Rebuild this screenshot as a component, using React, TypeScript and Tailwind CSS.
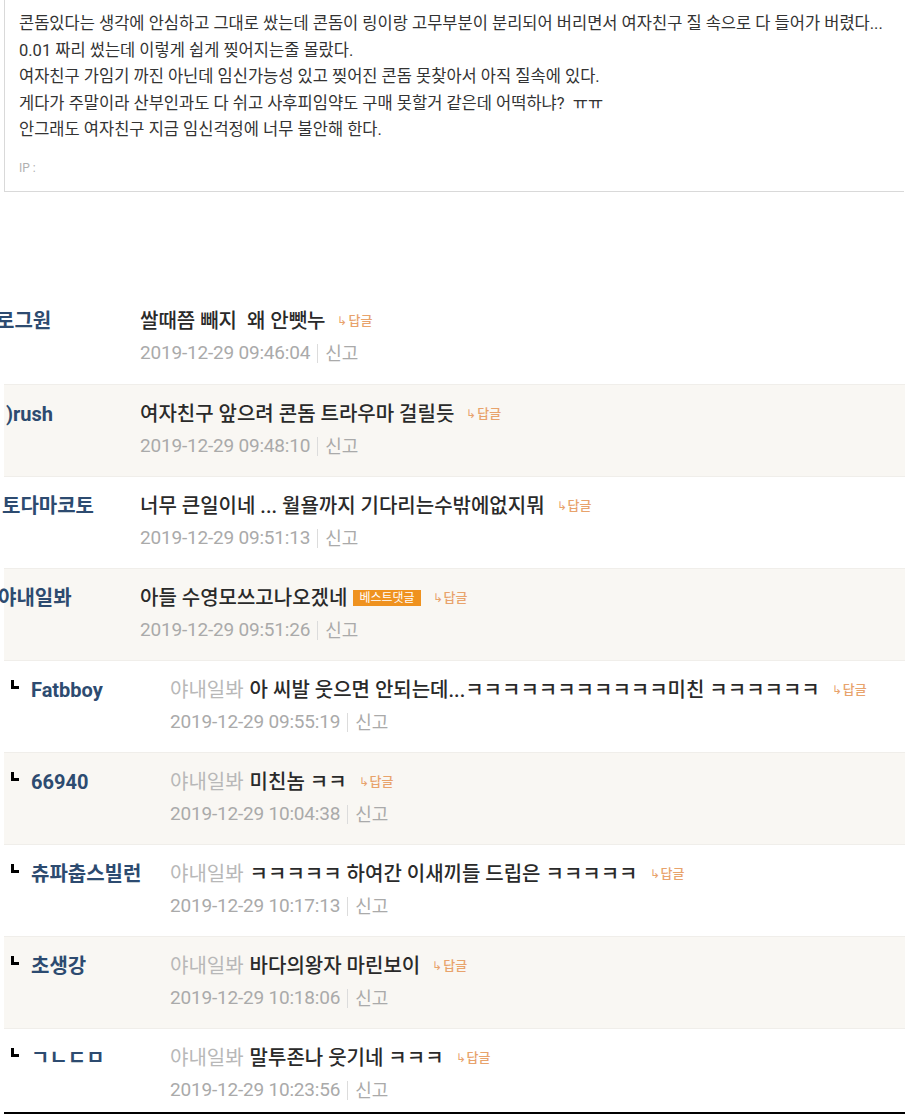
type Comment = {
  name: string;
  text: string;
  date: string;
  reply?: boolean;
  best?: boolean;
  shift?: string;
};

const comments: Comment[] = [
  { name: '로그원', text: '쌀때쯤 빼지  왜 안뺏누', date: '2019-12-29 09:46:04', shift: '-ml-[8px]' },
  { name: ')rush', text: '여자친구 앞으려 콘돔 트라우마 걸릴듯 ', date: '2019-12-29 09:48:10', shift: 'ml-[2px]' },
  { name: '토다마코토', text: '너무 큰일이네 ... 월욜까지 기다리는수밖에없지뭐', date: '2019-12-29 09:51:13', shift: '-ml-[2px]' },
  { name: '야내일봐', text: '아들 수영모쓰고나오겠네', date: '2019-12-29 09:51:26', best: true, shift: '-ml-[6px]' },
  { name: 'Fatbboy', text: '아 씨발 웃으면 안되는데...ㅋㅋㅋㅋㅋㅋㅋㅋㅋㅋㅋ미친 ㅋㅋㅋㅋㅋㅋ', date: '2019-12-29 09:55:19', reply: true },
  { name: '66940', text: '미친놈 ㅋㅋ', date: '2019-12-29 10:04:38', reply: true },
  { name: '츄파춥스빌런', text: 'ㅋㅋㅋㅋㅋ 하여간 이새끼들 드립은 ㅋㅋㅋㅋㅋ', date: '2019-12-29 10:17:13', reply: true },
  { name: '초생강', text: '바다의왕자 마린보이', date: '2019-12-29 10:18:06', reply: true },
  { name: 'ㄱㄴㄷㅁ', text: '말투존나 웃기네 ㅋㅋㅋ', date: '2019-12-29 10:23:56', reply: true },
];

const postLines = [
  '콘돔있다는 생각에 안심하고 그대로 쌌는데 콘돔이 링이랑 고무부분이 분리되어 버리면서 여자친구 질 속으로 다 들어가 버렸다...',
  '0.01 짜리 썼는데 이렇게 쉽게 찢어지는줄 몰랐다.',
  '여자친구 가임기 까진 아닌데 임신가능성 있고 찢어진 콘돔 못찾아서 아직 질속에 있다.',
  '게다가 주말이라 산부인과도 다 쉬고 사후피임약도 구매 못할거 같은데 어떡하냐?  ㅠㅠ',
  '안그래도 여자친구 지금 임신걱정에 너무 불안해 한다.',
];

function ReplyLink() {
  return (
    <span className="ml-[12px] inline-flex items-center text-[13px] leading-none text-[#e8a36c]">
      <span className="mr-[1px] text-[12px]">↳</span>답글
    </span>
  );
}

function CommentRow({ c, index, last }: { c: Comment; index: number; last: boolean }) {
  const shaded = index % 2 === 1;
  return (
    <div
      className={`flex ${last ? 'h-[84px]' : 'h-[92px]'} ${index === 0 ? '' : 'border-t border-[#f0eeea]'} pt-[17px] ${
        shaded ? 'bg-[#f9f7f3]' : 'bg-white'
      }`}
    >
      {c.reply ? (
        <div className="flex w-[166px] shrink-0 items-start">
          <span className="mt-[2px] ml-[7px] h-[9px] w-[8px] border-b-[3px] border-l-[3px] border-black" />
          <span className="ml-[12px] text-[20px] font-bold leading-6 text-[#2d4b70] whitespace-nowrap">
            {c.name}
          </span>
        </div>
      ) : (
        <div className="w-[136px] shrink-0">
          <span className={`block text-[20px] font-bold leading-6 text-[#2d4b70] whitespace-nowrap ${c.shift ?? ''}`}>
            {c.name}
          </span>
        </div>
      )}
      <div className="flex flex-col">
        <div className="flex h-6 items-center whitespace-pre text-[20px] font-medium text-[#2a2a2a]">
          {c.reply && <span className="mr-[6px] font-normal text-[#b8b8b8]">야내일봐</span>}
          <span>{c.text.trimEnd()}</span>
          {c.best && (
            <span className="ml-[6px] inline-flex h-[16px] items-center bg-[#ef921f] px-[6px] text-[12px] font-normal leading-none text-white">
              베스트댓글
            </span>
          )}
          <ReplyLink />
        </div>
        <div className="mt-[9px] flex h-6 items-center text-[19px] text-[#aaaaaa]">
          <span className="tracking-[-0.2px]">{c.date}</span>
          <span className="mx-[7px] h-[19px] w-px bg-[#dcdcdc]" />
          <span className="text-[18px]">신고</span>
        </div>
      </div>
    </div>
  );
}

export default function App() {
  return (
    <div
      className="min-h-[1117px] w-[910px] overflow-hidden bg-white"
      style={{ fontFamily: 'Roboto, "Noto Sans CJK KR", "Noto Sans", sans-serif' }}
    >
      <div className="ml-[4px] w-[900px] border-b border-l border-[#d9d9d9] pt-[11px] pl-[14px]">
        {postLines.map((line, i) => (
          <p key={i} className="whitespace-pre text-[16.5px] leading-[26.5px] text-[#333333]">
            {line}
          </p>
        ))}
        <p className="mt-[12px] pb-[11px] text-[12px] leading-6 text-[#b0b0b0]">IP :</p>
      </div>

      <div className="mt-[100px] ml-[4px] w-[901px] border-b-2 border-black">
        {comments.map((c, i) => (
          <CommentRow key={i} c={c} index={i} last={i === comments.length - 1} />
        ))}
      </div>
    </div>
  );
}
